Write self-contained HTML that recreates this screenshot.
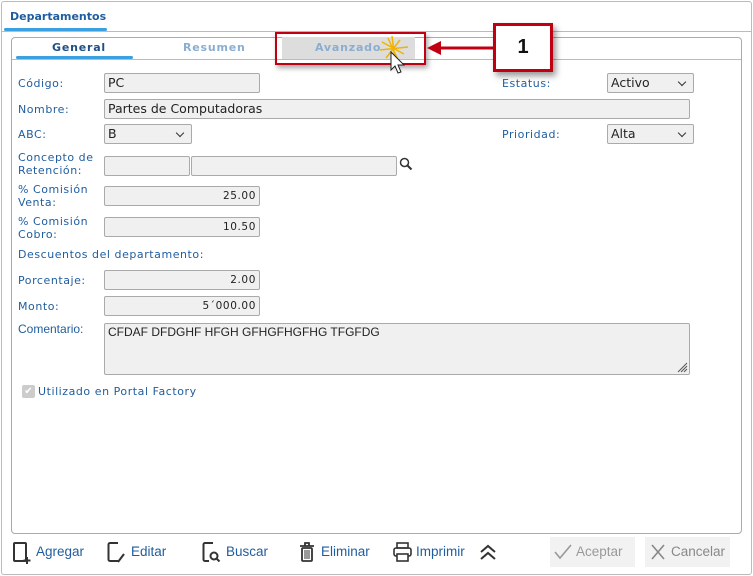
<!DOCTYPE html>
<html><head><meta charset="utf-8"><style>
*{box-sizing:border-box;margin:0;padding:0}
body{width:753px;height:576px;background:#fff;position:relative;overflow:hidden;font-family:"DejaVu Sans",Verdana,sans-serif;}
.a{position:absolute}
.lbl{position:absolute;font-size:11px;color:#1f5d9e;letter-spacing:0.55px;line-height:13px}
.inp{position:absolute;background:#f0f0f0;border:1px solid #aaa;border-radius:2px;font-size:12.5px;color:#222;padding-left:3px;line-height:18px}
.num{text-align:right;padding-right:3px;font-size:10.5px;letter-spacing:0.6px}
.sel::after{content:"";position:absolute;right:8px;top:5px;width:5px;height:5px;border-right:1.3px solid #333;border-bottom:1.3px solid #333;transform:rotate(45deg)}
.bt{position:absolute;font-family:"Liberation Sans",sans-serif;font-size:13.5px;color:#1f5d9e;top:544px}
</style></head><body>
<div class="a" style="left:1px;top:1px;width:751px;height:574px;border:1px solid #bbb;border-radius:3px"></div>
<div class="a" style="left:10px;top:10px;font-family:'DejaVu Sans',sans-serif;font-weight:bold;font-size:11px;color:#1f5d9e">Departamentos</div>
<div class="a" style="left:4px;top:28px;width:103px;height:3px;background:#3aa0e0;border-radius:2px"></div>
<div class="a" style="left:2px;top:31px;width:749px;height:1px;background:#bbb"></div>
<div class="a" style="left:11px;top:37px;width:731px;height:497px;border:1px solid #aaa;border-radius:4px"></div>
<div class="a" style="left:12px;top:59px;width:729px;height:1px;background:#bbb"></div>
<div class="a" style="left:282px;top:37px;width:133px;height:22px;background:#ddd"></div>
<div class="a" style="left:52px;top:41px;font-weight:bold;font-size:11px;color:#1f4f86;letter-spacing:0.8px">General</div>
<div class="a" style="left:16px;top:56px;width:117px;height:3px;background:#3aa0e0;border-radius:2px"></div>
<div class="a" style="left:183px;top:41px;font-weight:bold;font-size:11px;color:#8aaed0;letter-spacing:0.8px">Resumen</div>
<div class="a" style="left:315px;top:41px;font-weight:bold;font-size:11px;color:#8aaed0;letter-spacing:0.8px">Avanzado</div>
<div class="lbl" style="left:18px;top:77px">Código:</div>
<div class="inp" style="left:104px;top:73px;width:156px;height:20px">PC</div>
<div class="lbl" style="left:502px;top:77px">Estatus:</div>
<div class="inp sel" style="left:607px;top:73px;width:87px;height:20px;background:#f0f0f0">Activo</div>
<div class="lbl" style="left:18px;top:103px">Nombre:</div>
<div class="inp" style="left:104px;top:99px;width:586px;height:20px">Partes de Computadoras</div>
<div class="lbl" style="left:18px;top:128px">ABC:</div>
<div class="inp sel" style="left:104px;top:124px;width:88px;height:20px">B</div>
<div class="lbl" style="left:502px;top:128px">Prioridad:</div>
<div class="inp sel" style="left:607px;top:124px;width:87px;height:20px">Alta</div>
<div class="lbl" style="left:18px;top:151px">Concepto de<br>Retención:</div>
<div class="inp" style="left:104px;top:156px;width:86px;height:20px"></div>
<div class="inp" style="left:191px;top:156px;width:206px;height:20px"></div>
<svg class="a" style="left:399px;top:157px" width="14" height="14" viewBox="0 0 14 14"><circle cx="5.5" cy="5.5" r="4" fill="none" stroke="#333" stroke-width="1.5"/><line x1="8.5" y1="8.5" x2="12.5" y2="12.5" stroke="#333" stroke-width="2"/></svg>
<div class="lbl" style="left:18px;top:183px">% Comisión<br>Venta:</div>
<div class="inp num" style="left:104px;top:186px;width:156px;height:20px">25.00</div>
<div class="lbl" style="left:18px;top:215px">% Comisión<br>Cobro:</div>
<div class="inp num" style="left:104px;top:217px;width:156px;height:20px">10.50</div>
<div class="lbl" style="left:18px;top:248px">Descuentos del departamento:</div>
<div class="lbl" style="left:18px;top:274px">Porcentaje:</div>
<div class="inp num" style="left:104px;top:270px;width:156px;height:20px">2.00</div>
<div class="lbl" style="left:18px;top:300px">Monto:</div>
<div class="inp num" style="left:104px;top:296px;width:156px;height:20px">5´000.00</div>
<div class="lbl" style="left:18px;top:323px;font-family:'Liberation Sans',sans-serif;font-size:12px;letter-spacing:0">Comentario:</div>
<div class="inp" style="left:104px;top:323px;width:586px;height:52px;font-family:'Liberation Sans',sans-serif;font-size:12px;line-height:17px">CFDAF DFDGHF HFGH GFHGFHGFHG TFGFDG</div>
<svg class="a" style="left:676px;top:361px" width="12" height="12"><path d="M11 2L2 11M11 5L5 11M11 8L8 11" stroke="#555" stroke-width="1"/></svg>
<div class="a" style="left:22px;top:385px;width:13px;height:13px;background:#ccc;border-radius:2px;color:#fff;font-size:10px;text-align:center;line-height:13px">✔</div>
<div class="lbl" style="left:38px;top:385px">Utilizado en Portal Factory</div>
<svg class="a" style="left:12px;top:541px" width="22" height="24"><rect x="2" y="2" width="12" height="18" rx="1" fill="none" stroke="#333" stroke-width="2"/><path d="M15 16v7M11.5 19.5h7" stroke="#333" stroke-width="2"/></svg>
<div class="bt" style="left:36px">Agregar</div>
<svg class="a" style="left:106px;top:541px" width="22" height="24"><path d="M12 2H4a1.5 1.5 0 0 0-1.5 1.5v15A1.5 1.5 0 0 0 4 20h8" fill="none" stroke="#333" stroke-width="2"/><path d="M12 21l6-8" stroke="#333" stroke-width="2"/></svg>
<div class="bt" style="left:131px">Editar</div>
<svg class="a" style="left:201px;top:541px" width="22" height="24"><path d="M12 2H4a1.5 1.5 0 0 0-1.5 1.5v15A1.5 1.5 0 0 0 4 20h4" fill="none" stroke="#333" stroke-width="2"/><circle cx="13" cy="15" r="3.5" fill="none" stroke="#333" stroke-width="2"/><path d="M15.5 17.5l3 3" stroke="#333" stroke-width="2"/></svg>
<div class="bt" style="left:226px">Buscar</div>
<svg class="a" style="left:298px;top:541px" width="20" height="22"><path d="M2 5h14M7 5V2h4v3" fill="none" stroke="#333" stroke-width="1.8"/><rect x="4" y="7" width="10" height="13" rx="1" fill="none" stroke="#333" stroke-width="1.8"/><path d="M7 9v9M9 9v9M11 9v9" stroke="#333" stroke-width="1"/></svg>
<div class="bt" style="left:321px">Eliminar</div>
<svg class="a" style="left:392px;top:541px" width="22" height="22"><rect x="5" y="2" width="11" height="5" fill="none" stroke="#333" stroke-width="1.6"/><rect x="2" y="7" width="17" height="8" rx="2" fill="none" stroke="#333" stroke-width="1.6"/><rect x="5" y="13" width="11" height="7" fill="#fff" stroke="#333" stroke-width="1.6"/></svg>
<div class="bt" style="left:416px">Imprimir</div>
<svg class="a" style="left:478px;top:543px" width="20" height="18"><path d="M3 9l7-6 7 6M3 16l7-6 7 6" fill="none" stroke="#333" stroke-width="2"/></svg>
<div class="a" style="left:550px;top:537px;width:85px;height:30px;background:#f2f2f2"></div>
<svg class="a" style="left:553px;top:543px" width="20" height="18"><path d="M2 9l5 6L18 2" fill="none" stroke="#999" stroke-width="1.6"/></svg>
<div class="bt" style="left:576px;color:#999">Aceptar</div>
<div class="a" style="left:645px;top:537px;width:85px;height:30px;background:#f2f2f2"></div>
<svg class="a" style="left:649px;top:543px" width="18" height="18"><path d="M3 2l12 14M15 2L3 16" stroke="#888" stroke-width="1.6"/></svg>
<div class="bt" style="left:671px;color:#888">Cancelar</div>
<div class="a" style="left:275px;top:32px;width:151px;height:33px;border:2.5px solid #c00010;box-shadow:2px 3px 5px rgba(0,0,0,.35)"></div>
<svg class="a" style="left:376px;top:34px" width="40" height="42"><g stroke="#f0b400" stroke-width="1.5"><path d="M16 2L19 26M6 8L28 20M4 16L32 13M10 24L24 6M22 26L12 4"/></g><path d="M15 18v18l4-4 3 7 3-1-3-7h6z" fill="#fff" stroke="#222" stroke-width="1"/></svg>
<svg class="a" style="left:424px;top:40px" width="72" height="16"><path d="M16 8H70" stroke="#c00010" stroke-width="3"/><path d="M3 8l14-7v14z" fill="#c00010"/></svg>
<div class="a" style="left:493px;top:23px;width:60px;height:49px;border:3px solid #c00010;background:#fff;box-shadow:3px 4px 6px rgba(0,0,0,.4);font-family:'Liberation Sans',sans-serif;font-weight:bold;font-size:20px;text-align:center;line-height:43px;color:#111">1</div>
</body></html>
